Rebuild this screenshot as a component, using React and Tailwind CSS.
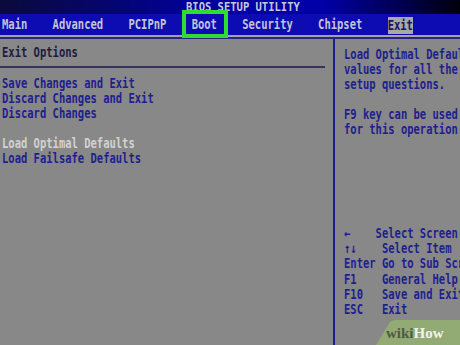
const Line = ({ children, className = '' }) => (
  <div className={`h-[15px] leading-[15px] whitespace-pre ${className}`}>
    <span className="inline-block scale-y-[1.3]">{children || ' '}</span>
  </div>
)

const leftItems = [
  { t: 'Save Changes and Exit' },
  { t: 'Discard Changes and Exit' },
  { t: 'Discard Changes' },
  { t: '' },
  { t: 'Load Optimal Defaults', hi: true },
  { t: 'Load Failsafe Defaults' },
]

const helpText = ['Load Optimal Defaults', 'values for all the', 'setup questions.', '', 'F9 key can be used', 'for this operation.']

const keys = [
  ['←', '    Select Screen'],
  ['↑↓', '    Select Item'],
  ['Enter', ' Go to Sub Screen'],
  ['F1', '    General Help'],
  ['F10', '   Save and Exit'],
  ['ESC', '   Exit'],
]

export default function App() {
  return (
    <div className="relative w-[460px] h-[345px] overflow-hidden bg-[#888888] font-['DejaVu_Sans_Mono',monospace] font-bold text-[10.5px] text-[#1e1e8e]">
      {/* title band */}
      <div className="h-[14px] pl-[186px] bg-[linear-gradient(90deg,#0a0a3a,#0000a0_45%,#0000a8_70%,#00000c)] text-[#c8c8dc] overflow-hidden">
        <div className="h-[14px] leading-[13px] whitespace-pre">
          <span className="inline-block scale-y-[1.25]">BIOS SETUP UTILITY</span>
        </div>
      </div>

      {/* menu bar */}
      <div className="h-[21px] bg-[#0c0cb2] pl-[2px] text-[#c4c4d8] whitespace-pre leading-[21px]">
        <span className="inline-block scale-y-[1.3]">
          {'Main    Advanced    PCIPnP    Boot    Security    Chipset    '}
        </span>
        <span className="inline-block bg-[#a8a8a8] text-[#14145a] h-[17px] leading-[17px] align-middle">
          <span className="inline-block scale-y-[1.3]">Exit</span>
        </span>
      </div>
      <div className="h-[2px] bg-[#a4a4a8]" />
      <div className="h-[2px] bg-[#28287a]" />

      <div className="flex h-[306px]">
        <div className="w-[333px] pt-[6px]">
          <Line className="text-[#1c1c40] pl-[2px]">Exit Options</Line>
          <div className="mt-[6px] w-[325px] h-[2px] bg-[#34345c]" />
          <div className="mt-[8px] pl-[2px]">
            {leftItems.map((it, i) => (
              <Line key={i} className={it.hi ? 'text-[#d2d2d2]' : ''}>{it.t}</Line>
            ))}
          </div>
        </div>
        <div className="w-[2px] bg-[#1c1c96]" />
        <div className="flex-1 pl-[9px] pt-[8px] overflow-hidden">
          {helpText.map((t, i) => (
            <Line key={i}>{t}</Line>
          ))}
          <div className="mt-[89px]">
            {keys.map(([k, d], i) => (
              <div key={i} className="h-[15.2px] leading-[15.2px] whitespace-pre">
                <span className="inline-block scale-y-[1.3]">{k}{d}</span>
              </div>
            ))}
          </div>
        </div>
      </div>

      {/* annotation box */}
      <div className="absolute left-[182px] top-[10px] w-[46px] h-[28px] border-[4px] border-[#30dc30]" />

      {/* watermark */}
      <svg className="absolute left-[370px] top-[320px]" width="90" height="25" viewBox="0 0 90 25">
        <path d="M20 2 Q22 0 26 0 L90 0 L90 25 L6 25 Z" fill="#93ae72" opacity="0.9" />
      </svg>
      <div className="absolute left-[386px] top-[325px] font-['Liberation_Serif',serif] font-bold text-[15px] leading-[16px]">
        <span className="text-[#4e5a44]">wiki</span>
        <span className="text-[#f2f2ee]">How</span>
      </div>
    </div>
  )
}
